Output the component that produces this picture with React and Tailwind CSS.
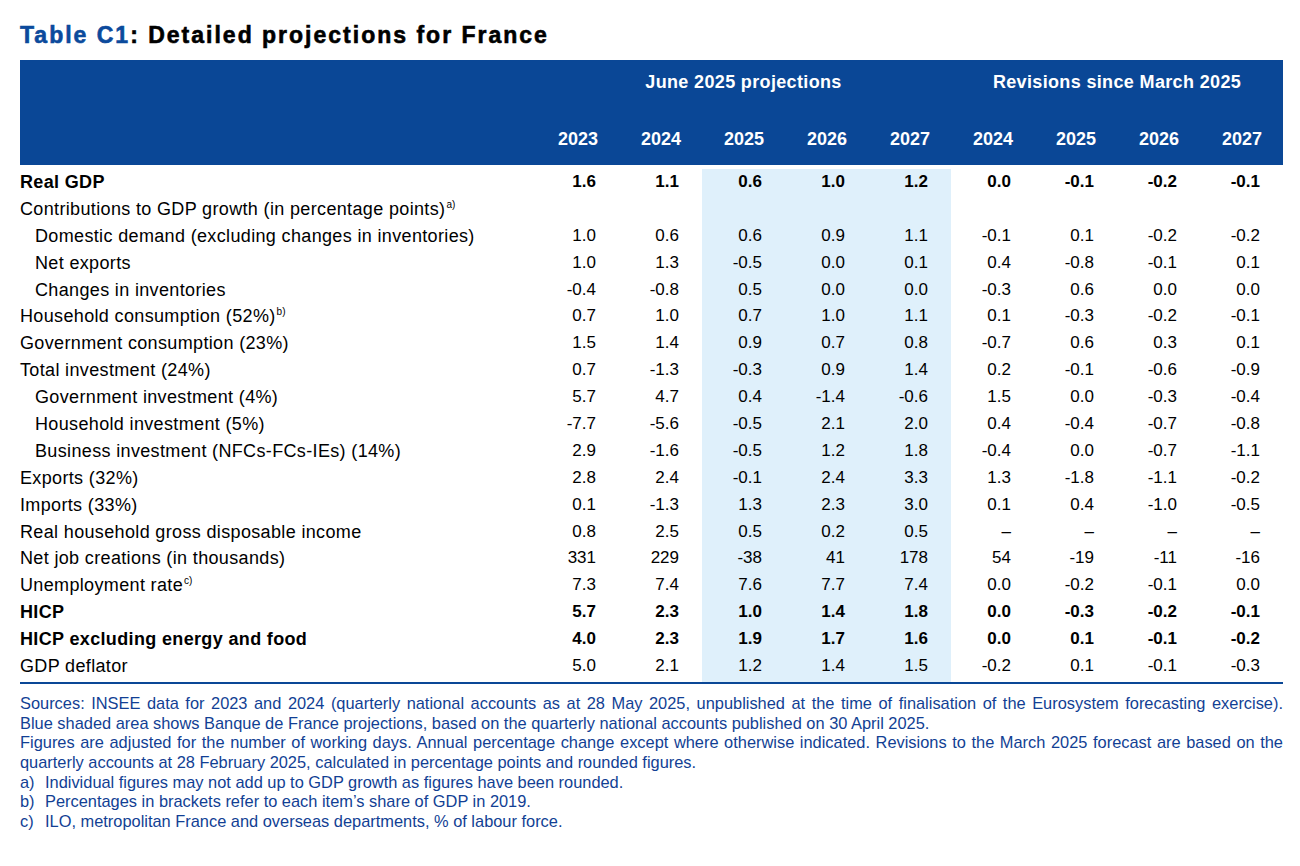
const rows = [
  { label: "Real GDP", bold: true, v: ["1.6", "1.1", "0.6", "1.0", "1.2", "0.0", "-0.1", "-0.2", "-0.1"] },
  { label: "Contributions to GDP growth (in percentage points)", sup: "a)", v: ["", "", "", "", "", "", "", "", ""] },
  { label: "Domestic demand (excluding changes in inventories)", indent: true, v: ["1.0", "0.6", "0.6", "0.9", "1.1", "-0.1", "0.1", "-0.2", "-0.2"] },
  { label: "Net exports", indent: true, v: ["1.0", "1.3", "-0.5", "0.0", "0.1", "0.4", "-0.8", "-0.1", "0.1"] },
  { label: "Changes in inventories", indent: true, v: ["-0.4", "-0.8", "0.5", "0.0", "0.0", "-0.3", "0.6", "0.0", "0.0"] },
  { label: "Household consumption (52%)", sup: "b)", v: ["0.7", "1.0", "0.7", "1.0", "1.1", "0.1", "-0.3", "-0.2", "-0.1"] },
  { label: "Government consumption (23%)", v: ["1.5", "1.4", "0.9", "0.7", "0.8", "-0.7", "0.6", "0.3", "0.1"] },
  { label: "Total investment (24%)", v: ["0.7", "-1.3", "-0.3", "0.9", "1.4", "0.2", "-0.1", "-0.6", "-0.9"] },
  { label: "Government investment (4%)", indent: true, v: ["5.7", "4.7", "0.4", "-1.4", "-0.6", "1.5", "0.0", "-0.3", "-0.4"] },
  { label: "Household investment (5%)", indent: true, v: ["-7.7", "-5.6", "-0.5", "2.1", "2.0", "0.4", "-0.4", "-0.7", "-0.8"] },
  { label: "Business investment (NFCs-FCs-IEs) (14%)", indent: true, v: ["2.9", "-1.6", "-0.5", "1.2", "1.8", "-0.4", "0.0", "-0.7", "-1.1"] },
  { label: "Exports (32%)", v: ["2.8", "2.4", "-0.1", "2.4", "3.3", "1.3", "-1.8", "-1.1", "-0.2"] },
  { label: "Imports (33%)", v: ["0.1", "-1.3", "1.3", "2.3", "3.0", "0.1", "0.4", "-1.0", "-0.5"] },
  { label: "Real household gross disposable income", v: ["0.8", "2.5", "0.5", "0.2", "0.5", "–", "–", "–", "–"] },
  { label: "Net job creations (in thousands)", v: ["331", "229", "-38", "41", "178", "54", "-19", "-11", "-16"] },
  { label: "Unemployment rate", sup: "c)", v: ["7.3", "7.4", "7.6", "7.7", "7.4", "0.0", "-0.2", "-0.1", "0.0"] },
  { label: "HICP", bold: true, v: ["5.7", "2.3", "1.0", "1.4", "1.8", "0.0", "-0.3", "-0.2", "-0.1"] },
  { label: "HICP excluding energy and food", bold: true, v: ["4.0", "2.3", "1.9", "1.7", "1.6", "0.0", "0.1", "-0.1", "-0.2"] },
  { label: "GDP deflator", v: ["5.0", "2.1", "1.2", "1.4", "1.5", "-0.2", "0.1", "-0.1", "-0.3"] },
];

const years = ["2023", "2024", "2025", "2026", "2027", "2024", "2025", "2026", "2027"];

const notes = [
  ["a)", "Individual figures may not add up to GDP growth as figures have been rounded."],
  ["b)", "Percentages in brackets refer to each item’s share of GDP in 2019."],
  ["c)", "ILO, metropolitan France and overseas departments, % of labour force."],
];

export default function App() {
  return (
    <div className="w-[1300px] h-[866px] bg-white px-[20px] pt-[20px] text-black" style={{ fontFamily: '"Liberation Sans", Arial, sans-serif' }}>
      <h1 className="text-[23px] font-bold leading-[30px] tracking-[2px] [-webkit-text-stroke:0.6px]">
        <span className="text-[#0b4a9c]">Table C1</span>: Detailed projections for France
      </h1>

      <div className="mt-[10px] w-[1263px]">
        {/* header band */}
        <div className="h-[105px] bg-[#0a4796] text-white font-bold text-[18px]">
          <div className="grid grid-cols-[516px_415px_332px] pt-[4px] h-[40px] items-center tracking-[0.35px]">
            <div />
            <div className="text-center">June 2025 projections</div>
            <div className="text-center">Revisions since March 2025</div>
          </div>
          <div className="grid grid-cols-[516px_repeat(9,83px)] mt-[19px] h-[40px] items-center">
            <div />
            {years.map((y, i) => (
              <div key={i} className="text-right pr-[21px]">{y}</div>
            ))}
          </div>
        </div>

        {/* body */}
        <div className="mt-[2px] pt-[2px] text-[17px]">
          {rows.map((r, ri) => (
            <div key={ri} className={`grid grid-cols-[516px_repeat(9,83px)] h-[26.9px] leading-[26.9px] ${r.bold ? "font-bold" : ""}`}>
              <div className={`text-[18px] tracking-[0.35px] ${r.indent ? "pl-[15px]" : ""}`}>
                {r.label}
                {r.sup && <sup className="text-[10px] font-normal tracking-normal relative top-[-7px] ml-[1px]">{r.sup}</sup>}
              </div>
              {r.v.map((v, i) => (
                <div key={i} className={`text-right pr-[23px] ${i >= 2 && i <= 4 ? "bg-[#dff0fb]" : ""}`}>{v}</div>
              ))}
            </div>
          ))}
          <div className="grid grid-cols-[516px_repeat(9,83px)] h-[2px]">
            <div /><div /><div />
            <div className="bg-[#dff0fb]" /><div className="bg-[#dff0fb]" /><div className="bg-[#dff0fb]" />
          </div>
        </div>
        <div className="h-[2px] bg-[#0a4796]" />

        {/* notes */}
        <div className="mt-[10px] text-[16.4px] leading-[19.7px] text-[#123f94]">
          <p className="text-justify [text-align-last:justify]">
            Sources: INSEE data for 2023 and 2024 (quarterly national accounts as at 28 May 2025, unpublished at the time of finalisation of the Eurosystem forecasting exercise).
          </p>
          <p>Blue shaded area shows Banque de France projections, based on the quarterly national accounts published on 30 April 2025.</p>
          <p className="text-justify">
            Figures are adjusted for the number of working days. Annual percentage change except where otherwise indicated. Revisions to the March 2025 forecast are based on the quarterly accounts at 28 February 2025, calculated in percentage points and rounded figures.
          </p>
          {notes.map(([k, t]) => (
            <div key={k} className="flex">
              <span className="w-[25px] shrink-0">{k}</span>
              <span>{t}</span>
            </div>
          ))}
        </div>
      </div>
    </div>
  );
}
